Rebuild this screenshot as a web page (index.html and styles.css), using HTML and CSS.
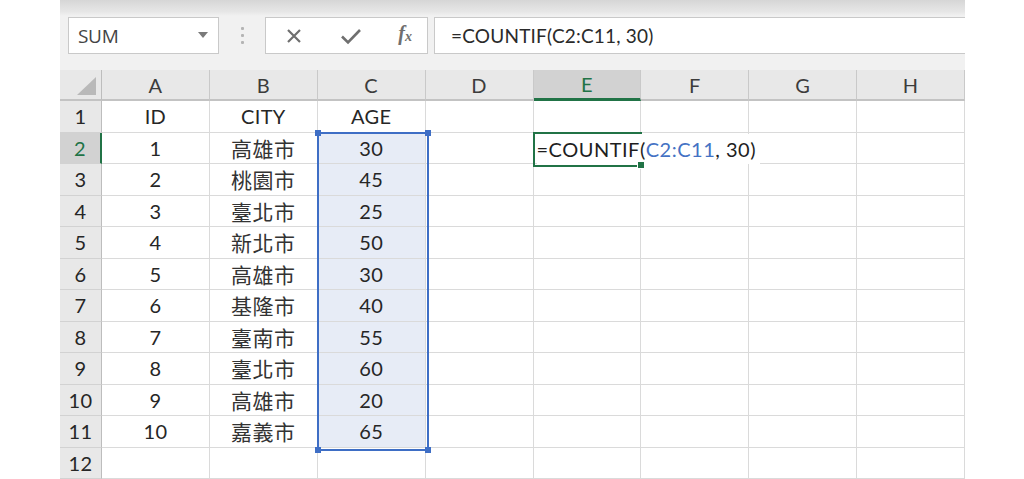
FILE: index.html
```html
<!DOCTYPE html>
<html lang="zh-Hant">
<head>
<meta charset="utf-8">
<title>COUNTIF</title>
<link rel="stylesheet" href="styles.css">
</head>
<body>
<div class="app">
  <div class="toolbar">
    <div class="namebox">
      <span class="name">SUM</span>
      <svg class="caret" width="10" height="6" viewBox="0 0 10 6"><path d="M0 0h10L5 6z" fill="#7a7a7a"/></svg>
    </div>
    <div class="grip"><i></i><i></i><i></i></div>
    <div class="fbuttons">
      <svg width="18" height="18" viewBox="0 0 18 18"><path d="M3 3l12 12M15 3L3 15" stroke="#6f6f6f" stroke-width="2.2" fill="none"/></svg>
      <svg width="22" height="18" viewBox="0 0 22 18"><path d="M2 9.5l6 6L20 3" stroke="#6f6f6f" stroke-width="2.6" fill="none"/></svg>
      <span class="fx">f<sub>x</sub></span>
    </div>
    <div class="formula">=COUNTIF(C2:C11, 30)</div>
  </div>

  <div class="grid">
    <div class="ch corner"><span class="tri"></span></div>
    <div class="ch">A</div><div class="ch">B</div><div class="ch">C</div><div class="ch">D</div>
    <div class="ch sel">E</div><div class="ch">F</div><div class="ch">G</div><div class="ch">H</div>

    <div class="rh">1</div><div class="c">ID</div><div class="c">CITY</div><div class="c">AGE</div><div class="c"></div><div class="c"></div><div class="c"></div><div class="c"></div><div class="c"></div>
    <div class="rh sel">2</div><div class="c">1</div><div class="c cjk">高雄市</div><div class="c r">30</div><div class="c"></div><div class="c"></div><div class="c"></div><div class="c"></div><div class="c"></div>
    <div class="rh">3</div><div class="c">2</div><div class="c cjk">桃園市</div><div class="c r">45</div><div class="c"></div><div class="c"></div><div class="c"></div><div class="c"></div><div class="c"></div>
    <div class="rh">4</div><div class="c">3</div><div class="c cjk">臺北市</div><div class="c r">25</div><div class="c"></div><div class="c"></div><div class="c"></div><div class="c"></div><div class="c"></div>
    <div class="rh">5</div><div class="c">4</div><div class="c cjk">新北市</div><div class="c r">50</div><div class="c"></div><div class="c"></div><div class="c"></div><div class="c"></div><div class="c"></div>
    <div class="rh">6</div><div class="c">5</div><div class="c cjk">高雄市</div><div class="c r">30</div><div class="c"></div><div class="c"></div><div class="c"></div><div class="c"></div><div class="c"></div>
    <div class="rh">7</div><div class="c">6</div><div class="c cjk">基隆市</div><div class="c r">40</div><div class="c"></div><div class="c"></div><div class="c"></div><div class="c"></div><div class="c"></div>
    <div class="rh">8</div><div class="c">7</div><div class="c cjk">臺南市</div><div class="c r">55</div><div class="c"></div><div class="c"></div><div class="c"></div><div class="c"></div><div class="c"></div>
    <div class="rh">9</div><div class="c">8</div><div class="c cjk">臺北市</div><div class="c r">60</div><div class="c"></div><div class="c"></div><div class="c"></div><div class="c"></div><div class="c"></div>
    <div class="rh">10</div><div class="c">9</div><div class="c cjk">高雄市</div><div class="c r">20</div><div class="c"></div><div class="c"></div><div class="c"></div><div class="c"></div><div class="c"></div>
    <div class="rh">11</div><div class="c">10</div><div class="c cjk">嘉義市</div><div class="c r">65</div><div class="c"></div><div class="c"></div><div class="c"></div><div class="c"></div><div class="c"></div>
    <div class="rh">12</div><div class="c"></div><div class="c"></div><div class="c"></div><div class="c"></div><div class="c"></div><div class="c"></div><div class="c"></div><div class="c"></div>

    <div class="range">
      <span class="h tl"></span><span class="h tr"></span><span class="h bl"></span><span class="h br"></span>
    </div>
    <div class="active">
      <span class="edit">=COUNTIF(<span class="ref">C2:C11</span>, 30)</span>
      <span class="fill"></span>
    </div>
  </div>
</div>
</body>
</html>
```

FILE: styles.css
```css
html, body {
  margin: 0;
  padding: 0;
  background: #ffffff;
}
body {
  width: 1024px;
  height: 479px;
  overflow: hidden;
}
.app {
  margin-left: 60px;
  width: 905px;
  height: 479px;
  display: flex;
  flex-direction: column;
}

/* ---------- toolbar ---------- */
.toolbar {
  height: 70px;
  box-sizing: border-box;
  padding: 17px 0 16px 8px;
  display: flex;
  align-items: stretch;
  background: linear-gradient(#d6d6d6 0px, #e7e7e7 12px, #f1f1f1 16px, #f1f1f1 100%);
}
.namebox {
  width: 151px;
  box-sizing: border-box;
  background: #fff;
  border: 1px solid #c9c9c9;
  display: flex;
  align-items: center;
  justify-content: space-between;
  padding: 0 10px 0 9px;
}
.name {
  font-family: "Open Sans", "Noto Sans", sans-serif;
  font-size: 19px;
  color: #444;
  letter-spacing: -0.3px;
}
.caret { margin-top: -2px; }
.grip {
  width: 46px;
  display: flex;
  flex-direction: column;
  align-items: center;
  justify-content: center;
  gap: 4px;
}
.grip i {
  display: block;
  width: 3px;
  height: 3px;
  background: #b4b4b4;
  border-radius: 1px;
}
.fbuttons {
  width: 163px;
  box-sizing: border-box;
  background: #fff;
  border: 1px solid #c9c9c9;
  display: flex;
  align-items: center;
  padding: 0 15px 0 19px;
  justify-content: space-between;
}
.fx {
  font-family: "Liberation Serif", "DejaVu Serif", serif;
  font-style: italic;
  font-size: 20px;
  color: #6f6f6f;
  font-weight: bold;
  line-height: 1;
  margin-top: -4px;
}
.fx sub {
  font-size: 14px;
  vertical-align: -1px;
}
.formula {
  flex: 1;
  margin-left: 6px;
  background: #fff;
  border: 1px solid #c9c9c9;
  border-right: none;
  display: flex;
  align-items: center;
  padding-left: 16px;
  font-family: "Lato", "Noto Sans", sans-serif;
  font-size: 19px;
  letter-spacing: 0.2px;
  color: #2a2a2a;
}

/* ---------- grid ---------- */
.grid {
  position: relative;
  flex: 1;
  display: grid;
  grid-template-columns: 42px repeat(8, 107.875px);
  grid-template-rows: 31px repeat(12, 31.5px);
  font-family: "Lato", "Noto Sans", sans-serif;
  font-size: 20px;
  letter-spacing: 0.4px;
  color: #262626;
}
.ch {
  background: #e8e8e8;
  border-right: 1px solid #c9c9c9;
  border-bottom: 2px solid #c3c3c3;
  box-sizing: border-box;
  display: flex;
  align-items: center;
  justify-content: center;
  color: #3c3c3c;
}
.ch.sel {
  background: #d2d2d2;
  border-bottom: 3px solid #217346;
  color: #217346;
}
.corner {
  position: relative;
  border-right: 1px solid #bdbdbd;
}
.tri {
  position: absolute;
  right: 5px;
  bottom: 4px;
  width: 0;
  height: 0;
  border-left: 19px solid transparent;
  border-bottom: 18px solid #b9b9b9;
}
.rh {
  background: #e8e8e8;
  border-right: 1px solid #bdbdbd;
  border-bottom: 1px solid #d2d2d2;
  box-sizing: border-box;
  display: flex;
  align-items: center;
  justify-content: center;
  color: #262626;
}
.rh.sel {
  background: #d2d2d2;
  color: #217346;
  border-right: 2px solid #217346;
}
.c {
  border-right: 1px solid #dadada;
  border-bottom: 1px solid #dadada;
  box-sizing: border-box;
  display: flex;
  align-items: center;
  justify-content: center;
  white-space: nowrap;
}
.c.r {
  background: #e7ecf6;
}
.cjk {
  font-family: "Noto Sans CJK TC", "Noto Sans CJK SC", sans-serif;
  font-size: 21px;
  letter-spacing: 0.5px;
  color: #333;
}

/* selection range C2:C11 */
.range {
  position: absolute;
  left: 256.75px;
  top: 61.5px;
  width: 107.875px;
  height: 315px;
  box-sizing: content-box;
  border: 2px solid #3e6ec5;
  pointer-events: none;
}
.h {
  position: absolute;
  width: 6px;
  height: 6px;
  background: #3e6ec5;
}
.tl { left: -4px; top: -4px; }
.tr { right: -4px; top: -4px; }
.bl { left: -4px; bottom: -4px; }
.br { right: -4px; bottom: -4px; }

/* active cell E2 in edit mode */
.active {
  position: absolute;
  left: 472.5px;
  top: 61.5px;
  width: 107.875px;
  height: 31.5px;
  border: 2px solid #217346;
  border-right: none;
  box-sizing: content-box;
}
.edit {
  position: absolute;
  left: 2px;
  top: 0;
  height: 30px;
  display: flex;
  align-items: center;
  background: #fff;
  padding-right: 4px;
  font-size: 20px;
  letter-spacing: 0.5px;
  color: #1e1e1e;
  white-space: nowrap;
}
.ref { color: #4472c4; }
.fill {
  position: absolute;
  right: -3px;
  bottom: -4px;
  width: 6px;
  height: 6px;
  background: #217346;
  border: 1px solid #fff;
}
```
